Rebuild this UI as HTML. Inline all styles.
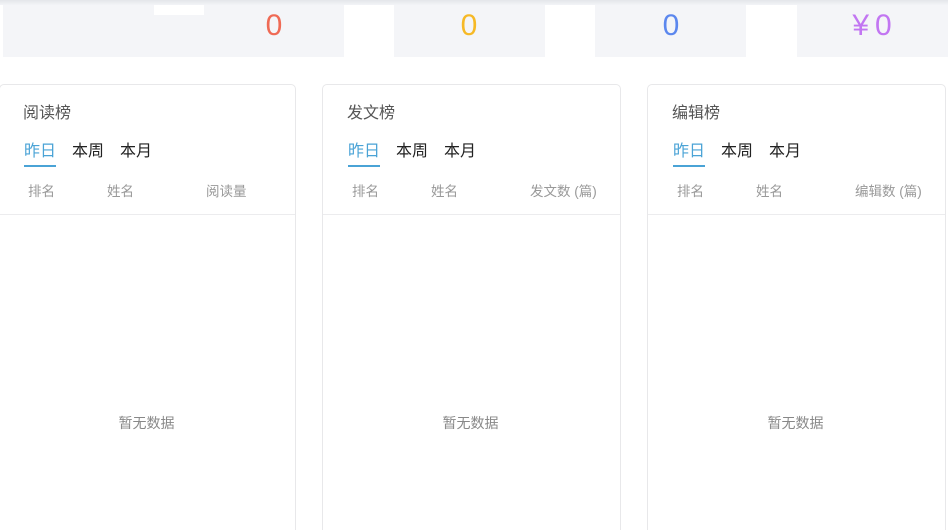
<!DOCTYPE html>
<html><head><meta charset="utf-8"><style>
*{margin:0;padding:0;box-sizing:border-box}
html,body{width:948px;height:530px;overflow:hidden}
body{background:#fff;font-family:"Liberation Sans","Noto Sans CJK SC",sans-serif;position:relative}
.top{position:absolute;left:0;top:0;width:948px;height:5px;background:linear-gradient(#e4e6ea,#f3f4f7);z-index:2}
.g{position:absolute;top:4px;height:53px;background:#f4f5f8}
.n{position:absolute;top:7px;font-size:30px;line-height:38px;text-align:center}
.card{position:absolute;top:84px;height:470px;border:1px solid #e8e8ea;border-radius:5px;background:#fff}
.t{position:absolute;top:19px;font-size:16px;color:#555;line-height:20px}
.tab{position:absolute;top:57px;font-size:16px;color:#222;line-height:20px}
.tab.a{color:#4aa3d6}
.ul{position:absolute;top:80px;width:32px;height:2px;background:#4aa3d6}
.h{position:absolute;top:99px;font-size:13.5px;color:#999;line-height:16px}
.line{position:absolute;left:0;right:0;top:129px;height:1px;background:#ececee}
.e{position:absolute;left:-2px;right:0;top:330px;text-align:center;font-size:14px;color:#888;line-height:16px}
</style></head><body>
<div class="top"></div>
<div class="g" style="left:3px;width:341px"></div>
<div style="position:absolute;left:154px;top:4px;width:50px;height:11px;background:#fff"></div>
<div class="g" style="left:394px;width:151px"></div>
<div class="g" style="left:595px;width:151px"></div>
<div class="g" style="left:797px;width:151px"></div>
<div class="n" style="left:254px;width:40px;color:#ef6a55">0</div>
<div class="n" style="left:449px;width:40px;color:#f6b926">0</div>
<div class="n" style="left:651px;width:40px;color:#5b87ee">0</div>
<div class="n" style="left:837px;width:70px;color:#c276f2">¥&thinsp;0</div>

<div class="card" style="left:-1px;width:297px">
<div class="t" style="left:23px">阅读榜</div>
<div class="tab a" style="left:24px">昨日</div><div class="tab" style="left:72px">本周</div><div class="tab" style="left:120px">本月</div>
<div class="ul" style="left:24px"></div>
<div class="h" style="left:28px">排名</div><div class="h" style="left:107px">姓名</div><div class="h" style="left:206px">阅读量</div>
<div class="line"></div><div class="e">暂无数据</div>
</div>
<div class="card" style="left:322px;width:299px">
<div class="t" style="left:24px">发文榜</div>
<div class="tab a" style="left:25px">昨日</div><div class="tab" style="left:73px">本周</div><div class="tab" style="left:121px">本月</div>
<div class="ul" style="left:25px"></div>
<div class="h" style="left:29px">排名</div><div class="h" style="left:108px">姓名</div><div class="h" style="left:207px">发文数 (篇)</div>
<div class="line"></div><div class="e">暂无数据</div>
</div>
<div class="card" style="left:647px;width:299px">
<div class="t" style="left:24px">编辑榜</div>
<div class="tab a" style="left:25px">昨日</div><div class="tab" style="left:73px">本周</div><div class="tab" style="left:121px">本月</div>
<div class="ul" style="left:25px"></div>
<div class="h" style="left:29px">排名</div><div class="h" style="left:108px">姓名</div><div class="h" style="left:207px">编辑数 (篇)</div>
<div class="line"></div><div class="e">暂无数据</div>
</div>
</body></html>
